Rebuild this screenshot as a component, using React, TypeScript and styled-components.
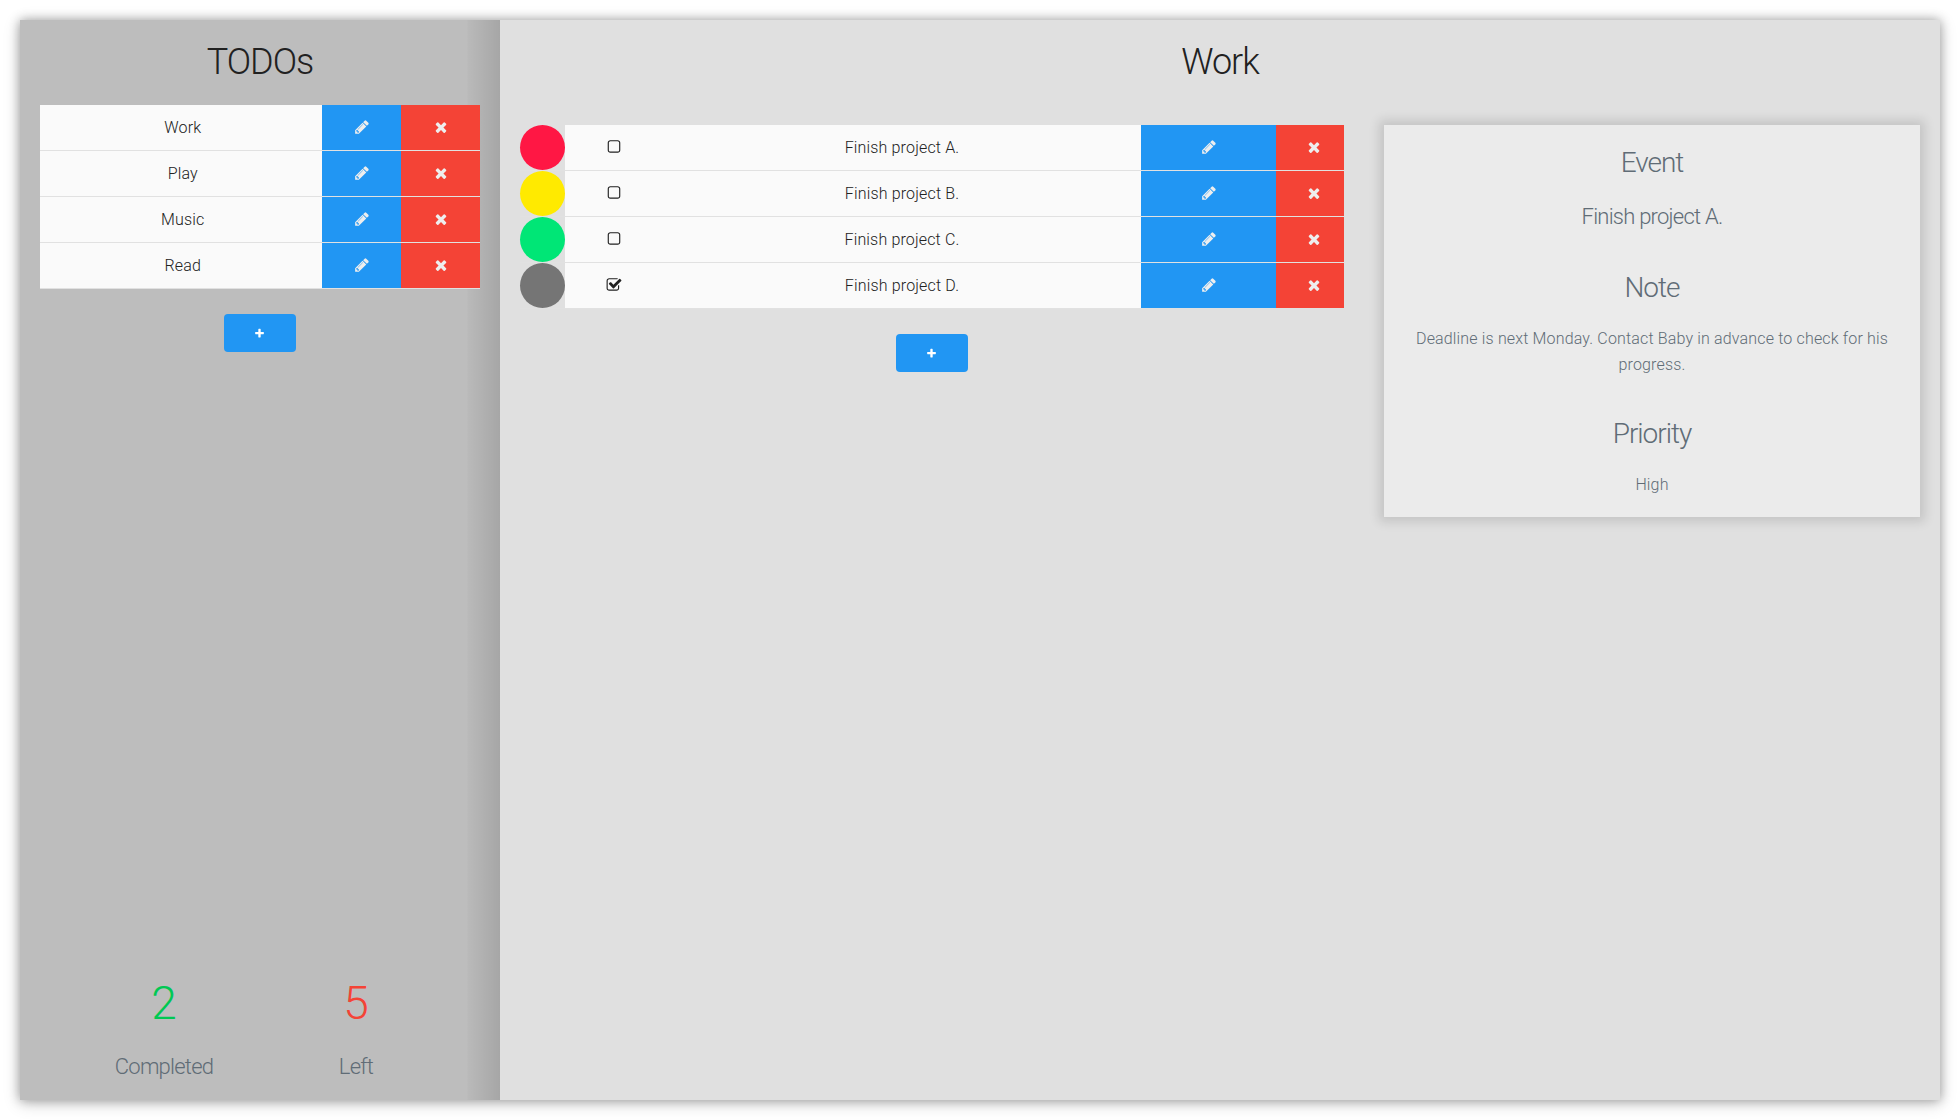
import React, { useState } from 'react';
import styled, { createGlobalStyle } from 'styled-components';

const GlobalStyle = createGlobalStyle`
  *, *::before, *::after { box-sizing: border-box; }
  body {
    margin: 0;
    background: #ffffff;
    color: #606c76;
    font-family: Roboto, 'Liberation Sans', sans-serif;
    font-size: 16px;
    font-weight: 300;
    line-height: 26px;
    letter-spacing: 0.01em;
  }
`;

const Page = styled.div`
  display: flex;
  min-height: 100vh;
  padding: 20px;
`;

const Board = styled.div`
  flex: 1;
  display: flex;
  background: #e0e0e0;
  box-shadow: 0 3px 16px rgba(0, 0, 0, 0.2), 0 0 10px rgba(0, 0, 0, 0.3);
`;

const Sidebar = styled.aside`
  flex: 0 0 25%;
  display: flex;
  flex-direction: column;
  justify-content: space-between;
  padding-top: 20px;
  background: linear-gradient(to left, rgba(0, 0, 0, 0.12), rgba(0, 0, 0, 0.02) 32px, transparent 33px) #bdbdbd;
`;

const Main = styled.main`
  flex: 1;
  padding-top: 20px;
`;

const Title = styled.h1`
  margin: 0 0 20px;
  color: #212121;
  font-size: 36px;
  font-weight: 300;
  line-height: 45px;
  letter-spacing: -1px;
  text-align: center;
`;

const SidebarBody = styled.section`
  padding: 0 20px;
`;

const Columns = styled.div`
  display: grid;
  grid-template-columns: 3fr 2fr;
  align-items: start;
`;

const Column = styled.section`
  padding: 20px;
`;

const Table = styled.table`
  width: 100%;
  table-layout: fixed;
  border-collapse: separate;
  border-spacing: 0;
`;

const Col = styled.col<{ $width?: string }>`
  width: ${(p) => p.$width ?? 'auto'};
`;

const Cell = styled.td<{ $bg?: string }>`
  height: 46px;
  padding: 0;
  border-bottom: 1px solid #e1e1e1;
  background: ${(p) => p.$bg ?? 'transparent'};
  background-clip: padding-box;
  color: #212121;
  text-align: center;
`;

const NameButton = styled.button`
  display: block;
  width: 100%;
  height: 45px;
  padding: 0 0 0 4px;
  border: 0;
  background: none;
  color: inherit;
  font: inherit;
  letter-spacing: inherit;
  cursor: pointer;
`;

const ActionButton = styled.button<{ $inset?: number }>`
  display: flex;
  align-items: center;
  justify-content: center;
  width: 100%;
  height: 45px;
  padding: 0 0 1px ${(p) => p.$inset ?? 0}px;
  border: 0;
  background: none;
  color: #eeeeee;
  cursor: pointer;
`;

const AddButton = styled.button`
  display: flex;
  align-items: center;
  justify-content: center;
  width: 72px;
  height: 38px;
  margin: 25px auto 0;
  padding: 1px 1px 0 0;
  border: 0;
  border-radius: 4px;
  background: #2196f3;
  color: #ffffff;
  cursor: pointer;
`;

const Dot = styled.span<{ $color: string }>`
  display: block;
  width: 45px;
  height: 45px;
  border-radius: 50%;
  background: ${(p) => p.$color};
`;

const CheckHolder = styled.span`
  position: relative;
  display: flex;
  align-items: center;
  justify-content: center;
  height: 45px;
  padding-bottom: 1px;
`;

const CheckInput = styled.input`
  position: absolute;
  inset: 0;
  width: 100%;
  height: 100%;
  margin: 0;
  opacity: 0;
  cursor: pointer;
`;

const Glyph = styled.svg<{ $size: number }>`
  display: block;
  width: ${(p) => p.$size}px;
  height: ${(p) => p.$size}px;
  fill: currentColor;
`;

const Panel = styled.div`
  display: flex;
  flex-direction: column;
  gap: 38px;
  padding: 20px 20px 19px;
  background: #ebebeb;
  box-shadow: 0 0 10px 5px rgba(0, 0, 0, 0.12);
  text-align: center;
`;

const PanelHeading = styled.h2`
  margin: 0 0 20px;
  font-size: 28px;
  font-weight: 300;
  line-height: 36px;
  letter-spacing: -1px;
`;

const Subheading = styled.h3`
  margin: 0;
  font-size: 22px;
  font-weight: 300;
  line-height: 31px;
  letter-spacing: -0.035em;
`;

const Text = styled.p`
  margin: 0;
`;

const Stats = styled.div`
  display: grid;
  grid-template-columns: 1fr 1fr;
  padding: 0 10% 18px;
  text-align: center;
`;

const Count = styled.div<{ $color: string }>`
  margin-bottom: 20px;
  color: ${(p) => p.$color};
  font-size: 46px;
  line-height: 55px;
`;

const PATHS = {
  pencil:
    'M491 1536l91-91-235-235-91 91v107h128v128h107zm523-928q0-22-22-22-10 0-17 7l-542 542q-7 7-7 17 0 22 22 22 10 0 17-7l542-542q7-7 7-17zm-54-192l416 416-832 832h-416v-416zm683 96q0 53-37 90l-166 166-416-416 166-165q36-38 90-38 53 0 91 38l235 234q37 39 37 91z',
  times:
    'M1490 1322q0 40-28 68l-136 136q-28 28-68 28t-68-28l-294-294-294 294q-28 28-68 28t-68-28l-136-136q-28-28-28-68t28-68l294-294-294-294q-28-28-28-68t28-68l136-136q28-28 68-28t68 28l294 294 294-294q28-28 68-28t68 28l136 136q28 28 28 68t-28 68l-294 294 294 294q28 28 28 68z',
  plus:
    'M1600 736v192q0 40-28 68t-68 28h-416v416q0 40-28 68t-68 28h-192q-40 0-68-28t-28-68v-416h-416q-40 0-68-28t-28-68v-192q0-40 28-68t68-28h416v-416q0-40 28-68t68-28h192q40 0 68 28t28 68v416h416q40 0 68 28t28 68z',
  square:
    'M1312 256h-832q-66 0-113 47t-47 113v832q0 66 47 113t113 47h832q66 0 113-47t47-113v-832q0-66-47-113t-113-47zm288 160v832q0 119-84.5 203.5t-203.5 84.5h-832q-119 0-203.5-84.5t-84.5-203.5v-832q0-119 84.5-203.5t203.5-84.5h832q119 0 203.5 84.5t84.5 203.5z',
  checked:
    'M1472 930v318q0 119-84.5 203.5t-203.5 84.5h-832q-119 0-203.5-84.5t-84.5-203.5v-832q0-119 84.5-203.5t203.5-84.5h832q63 0 117 25 15 7 18 23 3 17-9 29l-49 49q-10 10-23 10-3 0-9-2-23-6-45-6h-832q-66 0-113 47t-47 113v832q0 66 47 113t113 47h832q66 0 113-47t47-113v-254q0-13 9-22l64-64q10-10 23-10 6 0 12 3 20 8 20 29zm231-489l-814 814q-24 24-57 24t-57-24l-430-430q-24-24-24-57t24-57l110-110q24-24 57-24t57 24l263 263 647-647q24-24 57-24t57 24l110 110q24 24 24 57t-24 57z',
};

function Icon({ name, size = 16 }: { name: keyof typeof PATHS; size?: number }) {
  return (
    <Glyph $size={size} viewBox="0 0 1792 1792" aria-hidden="true">
      <path d={PATHS[name]} />
    </Glyph>
  );
}

const BLUE = '#2196f3';
const RED = '#f44336';
const PAPER = '#fafafa';

const LISTS = ['Work', 'Play', 'Music', 'Read'];

const TASKS = [
  { id: 'a', name: 'Finish project A.', color: '#ff1744', done: false },
  { id: 'b', name: 'Finish project B.', color: '#ffea00', done: false },
  { id: 'c', name: 'Finish project C.', color: '#00e676', done: false },
  { id: 'd', name: 'Finish project D.', color: '#757575', done: true },
];

export default function App() {
  const [tasks, setTasks] = useState(TASKS);

  const toggle = (id: string) =>
    setTasks((all) => all.map((t) => (t.id === id ? { ...t, done: !t.done } : t)));

  return (
    <>
      <GlobalStyle />
      <Page>
        <Board>
          <Sidebar>
            <SidebarBody>
              <Title>TODOs</Title>
              <Table>
                <colgroup>
                  <Col />
                  <Col $width="18%" />
                  <Col $width="18%" />
                </colgroup>
                <tbody>
                  {LISTS.map((name) => (
                    <tr key={name}>
                      <Cell $bg={PAPER}>
                        <NameButton type="button">{name}</NameButton>
                      </Cell>
                      <Cell $bg={BLUE}>
                        <ActionButton type="button" $inset={1} aria-label={`Edit ${name}`}>
                          <Icon name="pencil" />
                        </ActionButton>
                      </Cell>
                      <Cell $bg={RED}>
                        <ActionButton type="button" $inset={1} aria-label={`Delete ${name}`}>
                          <Icon name="times" />
                        </ActionButton>
                      </Cell>
                    </tr>
                  ))}
                </tbody>
              </Table>
              <AddButton type="button" aria-label="Add list">
                <Icon name="plus" size={11} />
              </AddButton>
            </SidebarBody>
            <Stats>
              <div>
                <Count $color="#00c853">2</Count>
                <Subheading>Completed</Subheading>
              </div>
              <div>
                <Count $color={RED}>5</Count>
                <Subheading>Left</Subheading>
              </div>
            </Stats>
          </Sidebar>
          <Main>
            <Title>Work</Title>
            <Columns>
              <Column>
                <Table>
                  <colgroup>
                    <Col $width="45px" />
                    <Col $width="98px" />
                    <Col />
                    <Col $width="135px" />
                    <Col $width="68px" />
                  </colgroup>
                  <tbody>
                    {tasks.map((task) => (
                      <tr key={task.id}>
                        <Cell>
                          <Dot $color={task.color} />
                        </Cell>
                        <Cell $bg={PAPER}>
                          <CheckHolder>
                            <Icon name={task.done ? 'checked' : 'square'} />
                            <CheckInput
                              type="checkbox"
                              id={`task-${task.id}`}
                              checked={task.done}
                              onChange={() => toggle(task.id)}
                            />
                          </CheckHolder>
                        </Cell>
                        <Cell $bg={PAPER}>
                          <label htmlFor={`task-${task.id}`}>{task.name}</label>
                        </Cell>
                        <Cell $bg={BLUE}>
                          <ActionButton type="button" aria-label={`Edit ${task.name}`}>
                            <Icon name="pencil" />
                          </ActionButton>
                        </Cell>
                        <Cell $bg={RED}>
                          <ActionButton type="button" $inset={7} aria-label={`Delete ${task.name}`}>
                            <Icon name="times" />
                          </ActionButton>
                        </Cell>
                      </tr>
                    ))}
                  </tbody>
                </Table>
                <AddButton type="button" aria-label="Add task">
                  <Icon name="plus" size={11} />
                </AddButton>
              </Column>
              <Column>
                <Panel>
                  <div>
                    <PanelHeading>Event</PanelHeading>
                    <Subheading>Finish project A.</Subheading>
                  </div>
                  <div>
                    <PanelHeading>Note</PanelHeading>
                    <Text>
                      Deadline is next Monday. Contact Baby in advance to check for his progress.
                    </Text>
                  </div>
                  <div>
                    <PanelHeading>Priority</PanelHeading>
                    <Text>High</Text>
                  </div>
                </Panel>
              </Column>
            </Columns>
          </Main>
        </Board>
      </Page>
    </>
  );
}
